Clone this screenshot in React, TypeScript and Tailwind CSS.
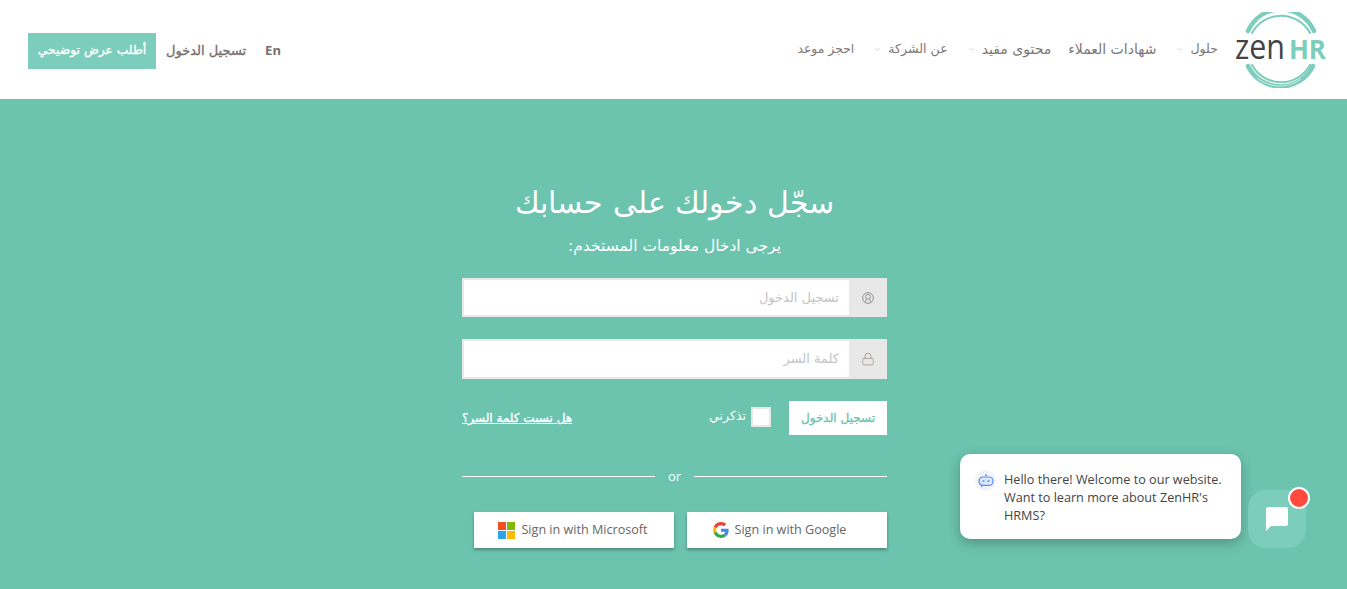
import React from 'react';

import { ChevronDown, Lock } from 'lucide-react';

const arabicFont = "font-['DejaVu_Sans','Noto_Sans',sans-serif]";

const navItems = [
  { label: 'حلول', hasMenu: true, size: 'text-[12.6px]' },
  { label: 'شهادات العملاء', hasMenu: false, size: 'text-[14px] -ml-[3px]' },
  { label: 'محتوى مفيد', hasMenu: true, size: 'text-[14px]' },
  { label: 'عن الشركة', hasMenu: true, size: 'text-[12.6px]' },
  { label: 'احجز موعد', hasMenu: false, size: 'text-[12.4px]' },
];

const ZenLogo = () => (
  <svg width="94" height="76" viewBox="0 0 94 76" className="shrink-0" direction="ltr" aria-label="ZenHR">
    {/* Brush ring, broken where the wordmark passes through */}
    <g fill="none" stroke="#7CCDBC" strokeLinecap="round">
      <path d="M15 19 A36 36 0 0 1 81 19" strokeWidth="4.5" />
      <path d="M19 21 A33 33 0 0 1 77 21" strokeWidth="2" />
      <path d="M15 54 A36 36 0 0 0 80 54" strokeWidth="4.5" />
      <path d="M19 53 A33 33 0 0 0 77 53" strokeWidth="2" />
    </g>
    <path d="M24 9 A36 36 0 0 1 70 8" fill="none" stroke="white" strokeWidth="0.6" />
    <path d="M24 66 A36 36 0 0 0 68 67" fill="none" stroke="white" strokeWidth="0.6" />
    <text
      x="2"
      y="47"
      textAnchor="start"
      textLength="50"
      lengthAdjust="spacingAndGlyphs"
      fontFamily="'Open Sans', sans-serif"
      fontSize="35"
      fontWeight="400"
      fill="#444444"
    >
      zen
    </text>
    <text
      x="56"
      y="47"
      textAnchor="start"
      textLength="37"
      lengthAdjust="spacingAndGlyphs"
      fontFamily="'Open Sans', sans-serif"
      fontSize="27"
      fontWeight="700"
      fill="#7CCDBC"
    >
      HR
    </text>
  </svg>
);

const UserCircleIcon = () => (
  <svg width="12" height="12" viewBox="0 0 12 12" fill="none" stroke="#8a8a8a" strokeWidth="0.9">
    <circle cx="6" cy="6" r="5.4" />
    <circle cx="6" cy="4.8" r="2.4" />
    <path d="M3.4 10.2 L4.4 7 M8.6 10.2 L7.6 7" />
  </svg>
);

const MicrosoftIcon = () => (
  <svg width="17" height="17" viewBox="0 0 17 17">
    <rect x="0" y="0" width="8" height="8" fill="#F25022" />
    <rect x="9" y="0" width="8" height="8" fill="#7FBA00" />
    <rect x="0" y="9" width="8" height="8" fill="#2EA3E6" />
    <rect x="9" y="9" width="8" height="8" fill="#FFB900" />
  </svg>
);

const GoogleIcon = () => (
  <svg width="16" height="16" viewBox="0 0 48 48">
    <path fill="#EA4335" d="M24 9.5c3.5 0 6.7 1.2 9.2 3.6l6.9-6.9C35.9 2.4 30.5 0 24 0 14.6 0 6.5 5.4 2.6 13.2l8 6.2C12.4 13.7 17.7 9.5 24 9.5z" />
    <path fill="#4285F4" d="M46.9 24.5c0-1.6-.1-3.1-.4-4.5H24v9h12.9c-.6 3-2.2 5.5-4.7 7.2l7.7 6c4.5-4.2 7-10.3 7-17.7z" />
    <path fill="#FBBC05" d="M10.5 28.6c-.5-1.4-.8-3-.8-4.6s.3-3.2.8-4.6l-8-6.2C.9 16.5 0 20.1 0 24s.9 7.5 2.6 10.8l7.9-6.2z" />
    <path fill="#34A853" d="M24 48c6.5 0 11.9-2.1 15.9-5.8l-7.7-6c-2.2 1.4-4.9 2.3-8.2 2.3-6.3 0-11.6-4.2-13.5-9.9l-8 6.2C6.5 42.6 14.6 48 24 48z" />
  </svg>
);

const BotIcon = () => (
  <svg width="16" height="14" viewBox="0 0 16 14" fill="none">
    <circle cx="8" cy="1.2" r="1" fill="#5B8DEF" />
    <rect x="1" y="3" width="14" height="8.4" rx="4" fill="#DCE8FD" stroke="#5B8DEF" strokeWidth="1.2" />
    <path d="M4.5 7.2h2M9.5 7.2h2" stroke="#3F6FD1" strokeWidth="1.2" />
    <path d="M3 11l0 2.4 2.4-2" fill="#5B8DEF" />
  </svg>
);

const App: React.FC = () => {
  return (
    <div dir="rtl" className={`relative h-[589px] overflow-hidden bg-[#6CC3AE] ${arabicFont}`}>
      {/* Header */}
      <header className="flex h-[99px] items-center justify-between bg-white pl-7 pr-5">
        <div className="flex items-center">
          <ZenLogo />
          <nav className="mr-[15px] flex items-center gap-[20px] whitespace-nowrap text-[#7d7776]">
            {navItems.map((item) => (
              <a key={item.label} className={`flex items-center gap-[7px] ${item.size}`}>
                <span>{item.label}</span>
                {item.hasMenu && <ChevronDown className="h-[7px] w-[7px] text-[#b5b5b5]" />}
              </a>
            ))}
          </nav>
        </div>

        <div className="mt-[2px] flex items-center whitespace-nowrap">
          <a dir="ltr" className="ml-[19px] font-['Open_Sans',sans-serif] text-[13px] font-bold text-[#77706f]">
            En
          </a>
          <a className="ml-[10px] text-[13px] text-[#77706f] [-webkit-text-stroke:0.35px]">تسجيل الدخول</a>
          <a className="flex h-9 w-32 items-center justify-center bg-[#7CCDBC] text-[12.3px] text-white [-webkit-text-stroke:0.35px]">
            أطلب عرض توضيحي
          </a>
        </div>
      </header>

      {/* Login form */}
      <main className="flex justify-center pl-[2px] text-white">
        <div className="w-[425px]">
          <h1 className="mt-[82px] text-center text-[29.5px] leading-[44px] font-extralight whitespace-nowrap">
            سجّل دخولك على حسابك
          </h1>
          <p className="mt-[11px] text-center text-[15.5px] leading-5">يرجى ادخال معلومات المستخدم:</p>

          <div className="mt-[22px] flex h-[39px] border-2 border-r-0 border-[#e8e8e8] bg-white">
            <span className="flex w-[38px] shrink-0 items-center justify-center bg-[#e8e8e8]">
              <UserCircleIcon />
            </span>
            <span className="flex flex-1 items-center pr-[10px] text-[13px] text-[#c4c4c4]">تسجيل الدخول</span>
          </div>

          <div className="mt-[22px] flex h-10 border-2 border-r-0 border-[#e8e8e8] bg-white">
            <span className="flex w-[38px] shrink-0 items-center justify-center bg-[#e8e8e8]">
              <Lock className="h-[14px] w-[14px] text-[#a08f8f]" strokeWidth={1.3} />
            </span>
            <span className="flex flex-1 items-center pr-[10px] text-[13px] text-[#c4c4c4]">كلمة السر</span>
          </div>

          <div className="mt-[22px] flex h-[34px] items-center justify-between">
            <div className="flex items-center">
              <button className="flex h-[34px] w-[98px] items-center justify-center bg-white text-[12px] text-[#6CC3AE] [-webkit-text-stroke:0.3px]">
                تسجيل الدخول
              </button>
              <span className="mr-[18px] mb-0.5 block h-5 w-5 border-2 border-[#e8e8e8] bg-white" />
              <span className="mr-[5px] mb-1 text-[12.6px]">تذكرني</span>
            </div>
            <a className="text-[12px] underline [-webkit-text-stroke:0.35px]">هل نسيت كلمة السر؟</a>
          </div>

          {/* Divider */}
          <div dir="ltr" className="mt-[31px] flex h-5 items-center font-['Open_Sans',sans-serif]">
            <span className="h-px flex-1 bg-white" />
            <span className="w-[39px] text-center text-[13px] leading-5">or</span>
            <span className="h-px flex-1 bg-white" />
          </div>

          {/* Social sign in */}
          <div className="mt-[26px] flex justify-start gap-[13px] font-['Open_Sans',sans-serif] text-[12.6px] text-[#666666]">
            <button
              dir="ltr"
              className="flex h-9 w-[200px] items-center justify-center gap-[6px] bg-white pr-[15px] shadow-[0_2px_3px_rgba(0,0,0,0.3)]"
            >
              <GoogleIcon />
              Sign in with Google
            </button>
            <button
              dir="ltr"
              className="flex h-9 w-[200px] items-center justify-center gap-1.5 bg-white pr-[2px] shadow-[0_2px_3px_rgba(0,0,0,0.3)]"
            >
              <MicrosoftIcon />
              Sign in with Microsoft
            </button>
          </div>
        </div>
      </main>

      {/* Chat widget */}
      <div
        dir="ltr"
        className="absolute top-[454px] left-[960px] flex h-[85px] w-[281px] gap-2 rounded-[10px] bg-white pt-[16px] pl-[15px] font-['Open_Sans',sans-serif] text-[12.65px] leading-[18px] text-[#444444] shadow-[0_4px_12px_rgba(0,0,0,0.25)]"
      >
        <span className="flex h-[21px] w-[21px] shrink-0 items-center justify-center rounded-full bg-[#f1f3f6]">
          <BotIcon />
        </span>
        <p className="w-[225px]">
          Hello there! Welcome to our website. Want to learn more about ZenHR's HRMS?
        </p>
      </div>

      <div className="absolute top-[490px] left-[1248px] flex h-[58px] w-[58px] items-center justify-center rounded-[18px] bg-[#7CCDBC]">
        <svg width="24" height="24" viewBox="0 0 24 24" fill="white">
          <path d="M3 0h18a2 2 0 0 1 2 2v15a2 2 0 0 1-2 2H6l-5 5V2a2 2 0 0 1 2-2z" />
        </svg>
        <span className="absolute -top-[3px] -right-[4px] h-[22px] w-[22px] rounded-full border-2 border-white bg-[#FF4A3D]" />
      </div>
    </div>
  );
};

export default App;
